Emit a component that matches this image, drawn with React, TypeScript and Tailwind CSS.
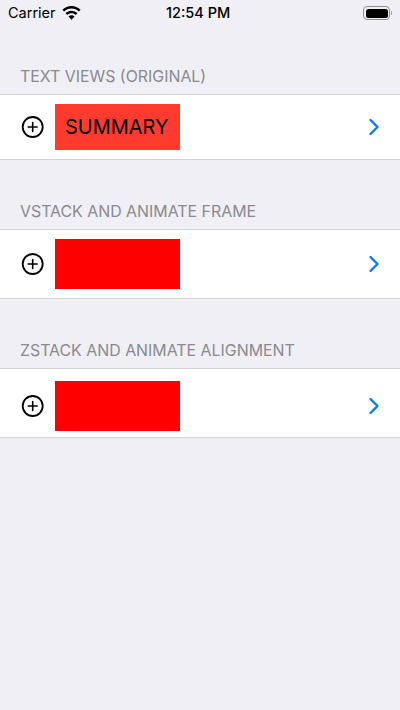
const font = { fontFamily: '"Inter", "Liberation Sans", sans-serif' };

function Plus() {
  return (
    <svg width="24" height="24" viewBox="0 0 24 24" fill="none" stroke="#000" className="shrink-0">
      <circle cx="11.7" cy="12" r="10" strokeWidth="1.8" />
      <path d="M11.700 7.500v9M7.200 12h9" strokeWidth="1.600" strokeLinecap="round" />
    </svg>
  );
}

function Chevron() {
  return (
    <svg width="12" height="18" viewBox="0 0 12 18" fill="none" stroke="#0a7aff" strokeWidth="2.400" strokeLinecap="round" strokeLinejoin="round">
      <path d="M2.500 2L9.500 9l-7 7" />
    </svg>
  );
}

function Section({ title, h, rowH, pt, children }: { title: string; h: string; rowH: string; pt?: string; children?: React.ReactNode }) {
  return (
    <div>
      <div className={`${h} pb-[8px] pl-5 flex items-end text-[15.900px] leading-[18px] text-[#8a8a8e]`}>{title}</div>
      <div className={`${rowH} bg-white border-y border-[#d2d2d6] flex items-center pl-[21px] pr-5 ${pt ?? ""}`}>
        <Plus />
        <div className="ml-[10px] flex-1">{children}</div>
        <Chevron />
      </div>
    </div>
  );
}

export default function App() {
  return (
    <div style={font} className="w-[400px] h-[710px] bg-[#f0eff5] overflow-hidden">
      <div className="h-[26px] relative flex items-center justify-between pl-2 pr-[8px] text-black">
        <div className="flex items-center gap-[6px]">
          <span className="text-[14.500px] leading-[26px]">Carrier</span>
          <svg width="19" height="14" viewBox="0 0 19 14" fill="#000">
            <path d="M9.500 0C6 0 2.800 1.400.4 3.700l1.700 1.900C4 3.700 6.600 2.600 9.500 2.600s5.500 1.100 7.400 3l1.700-1.900C16.200 1.400 13 0 9.500 0z" />
            <path d="M9.500 4.700c-2.300 0-4.400.9-6 2.400l1.700 1.900c1.100-1.100 2.600-1.700 4.300-1.700s3.200.6 4.300 1.700l1.700-1.900c-1.600-1.500-3.700-2.400-6-2.400z" />
            <path d="M9.500 9.200c-1.200 0-2.200.5-3 1.200l3 3.300 3-3.300c-.8-.7-1.800-1.200-3-1.200z" />
          </svg>
        </div>
        <span className="absolute left-[166px] text-[14.500px] font-medium leading-[26px]">12:54 PM</span>
        <div className="flex items-center gap-[1px]">
          <div className="w-[27px] h-[14px] rounded-[4px] border border-[#8e8e90] p-[1.500px]">
            <div className="w-full h-full rounded-[2.500px] bg-black" />
          </div>
          <div className="w-[1px] h-[4px] bg-[#9a9a9c] rounded-r" />
        </div>
      </div>
      <Section title="TEXT VIEWS (ORIGINAL)" h="h-[68px]" rowH="h-[66px]">
        <div className="w-[124.500px] h-[46px] pr-[1px] bg-[#ff3b30] flex items-center justify-center text-[20px] text-black">SUMMARY</div>
      </Section>
      <Section title="VSTACK AND ANIMATE FRAME" h="h-[69px]" rowH="h-[70px]">
        <div className="w-[125px] h-[50px] bg-[#ff0000]" />
      </Section>
      <Section title="ZSTACK AND ANIMATE ALIGNMENT" h="h-[69px]" rowH="h-[70px]" pt="pt-[5px]">
        <div className="w-[125px] h-[50px] bg-[#ff0000]" />
      </Section>
    </div>
  );
}
